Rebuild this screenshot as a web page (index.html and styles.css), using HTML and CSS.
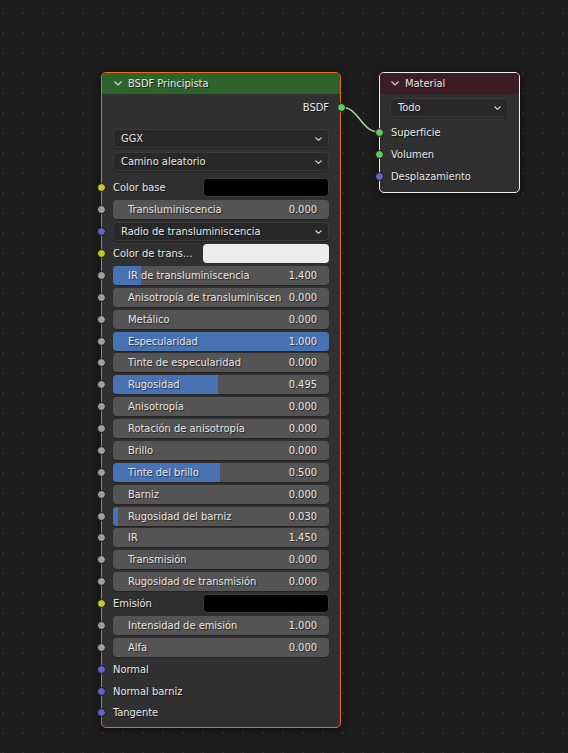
FILE: index.html
```html
<!DOCTYPE html>
<html lang="es">
<head>
<meta charset="UTF-8">
<title>Editor de nodos</title>
<link rel="stylesheet" href="styles.css">
</head>
<body>
<div class="editor">
    <svg class="links" width="568" height="753">
        <path class="link-edge" d="M341 107 C359 107, 361 132, 379 132"/>
        <path class="link" d="M341 107 C359 107, 361 132, 379 132"/>
    </svg>

    <div class="node principled">
        <div class="node-header">
            <svg class="chevron" width="8" height="5" viewBox="0 0 8 5"><polyline points="0.5,0.5 4,4 7.5,0.5"/></svg>
            <span>BSDF Principista</span>
        </div>
        <div class="node-body">
            <div class="out-row">BSDF<i class="socket green out"></i></div>

            <div class="select first"><span>GGX</span><svg class="caret" width="7" height="4" viewBox="0 0 7 4"><polyline points="0.5,0.5 3.5,3.3 6.5,0.5"/></svg></div>
            <div class="select"><span>Camino aleatorio</span><svg class="caret" width="7" height="4" viewBox="0 0 7 4"><polyline points="0.5,0.5 3.5,3.3 6.5,0.5"/></svg></div>

            <div class="rows">
                <div class="row"><i class="socket yellow"></i><span class="label">Color base</span><div class="swatch black"></div></div>
                <div class="row"><i class="socket grey"></i><div class="field"><span class="name">Transluminiscencia</span><span class="value">0.000</span></div></div>
                <div class="row"><i class="socket blue"></i><div class="select wide"><span>Radio de transluminiscencia</span><svg class="caret" width="7" height="4" viewBox="0 0 7 4"><polyline points="0.5,0.5 3.5,3.3 6.5,0.5"/></svg></div></div>
                <div class="row"><i class="socket yellow"></i><span class="label">Color de trans...</span><div class="swatch white"></div></div>
                <div class="row"><i class="socket grey"></i><div class="field"><div class="fill" style="width: 28px"></div><span class="name">IR de transluminiscencia</span><span class="value">1.400</span></div></div>
                <div class="row"><i class="socket grey"></i><div class="field"><span class="name">Anisotropía de transluminiscen</span><span class="value">0.000</span></div></div>
                <div class="row"><i class="socket grey"></i><div class="field"><span class="name">Metálico</span><span class="value">0.000</span></div></div>
                <div class="row"><i class="socket grey"></i><div class="field"><div class="fill" style="width: 216px"></div><span class="name">Especularidad</span><span class="value">1.000</span></div></div>
                <div class="row"><i class="socket grey"></i><div class="field"><span class="name">Tinte de especularidad</span><span class="value">0.000</span></div></div>
                <div class="row"><i class="socket grey"></i><div class="field"><div class="fill" style="width: 105px"></div><span class="name">Rugosidad</span><span class="value">0.495</span></div></div>
                <div class="row"><i class="socket grey"></i><div class="field"><span class="name">Anisotropía</span><span class="value">0.000</span></div></div>
                <div class="row"><i class="socket grey"></i><div class="field"><span class="name">Rotación de anisotropía</span><span class="value">0.000</span></div></div>
                <div class="row"><i class="socket grey"></i><div class="field"><span class="name">Brillo</span><span class="value">0.000</span></div></div>
                <div class="row"><i class="socket grey"></i><div class="field"><div class="fill" style="width: 107px"></div><span class="name">Tinte del brillo</span><span class="value">0.500</span></div></div>
                <div class="row"><i class="socket grey"></i><div class="field"><span class="name">Barniz</span><span class="value">0.000</span></div></div>
                <div class="row"><i class="socket grey"></i><div class="field"><div class="fill" style="width: 5px"></div><span class="name">Rugosidad del barniz</span><span class="value">0.030</span></div></div>
                <div class="row"><i class="socket grey"></i><div class="field"><span class="name">IR</span><span class="value">1.450</span></div></div>
                <div class="row"><i class="socket grey"></i><div class="field"><span class="name">Transmisión</span><span class="value">0.000</span></div></div>
                <div class="row"><i class="socket grey"></i><div class="field"><span class="name">Rugosidad de transmisión</span><span class="value">0.000</span></div></div>
                <div class="row"><i class="socket yellow"></i><span class="label">Emisión</span><div class="swatch black"></div></div>
                <div class="row"><i class="socket grey"></i><div class="field"><span class="name">Intensidad de emisión</span><span class="value">1.000</span></div></div>
                <div class="row"><i class="socket grey"></i><div class="field"><span class="name">Alfa</span><span class="value">0.000</span></div></div>
                <div class="row"><i class="socket blue"></i><span class="label">Normal</span></div>
                <div class="row"><i class="socket blue"></i><span class="label">Normal barniz</span></div>
                <div class="row"><i class="socket blue"></i><span class="label">Tangente</span></div>
            </div>
        </div>
    </div>

    <div class="node material">
        <div class="node-header">
            <svg class="chevron" width="8" height="5" viewBox="0 0 8 5"><polyline points="0.5,0.5 4,4 7.5,0.5"/></svg>
            <span>Material</span>
        </div>
        <div class="node-body">
            <div class="select first"><span>Todo</span><svg class="caret" width="7" height="4" viewBox="0 0 7 4"><polyline points="0.5,0.5 3.5,3.3 6.5,0.5"/></svg></div>
            <div class="rows">
                <div class="row"><i class="socket green"></i><span class="label">Superficie</span></div>
                <div class="row"><i class="socket green"></i><span class="label">Volumen</span></div>
                <div class="row"><i class="socket blue"></i><span class="label">Desplazamiento</span></div>
            </div>
        </div>
    </div>
</div>
</body>
</html>
```

FILE: styles.css
```css
body {
    margin: 0;
    background: #1d1d1d;
    font-family: "DejaVu Sans Condensed", "DejaVu Sans", sans-serif;
    font-size: 11px;
    color: #e8e8e8;
}
.editor {
    position: relative;
    width: 568px;
    height: 753px;
    overflow: hidden;
    background-color: #1d1d1d;
    background-image: radial-gradient(circle, #2d2d2d 1px, transparent 1.3px);
    background-size: 20px 20px;
    background-position: -7px 3px;
}
.links {
    position: absolute;
    left: 0;
    top: 0;
}
.link-edge {
    fill: none;
    stroke: #171717;
    stroke-width: 3.5;
}
.link {
    fill: none;
    stroke: #b4d0ac;
    stroke-width: 1.6;
}

/* nodes */
.node {
    position: absolute;
    box-sizing: border-box;
    background: #303030;
    border-radius: 5px;
    box-shadow: 0 2px 8px rgba(0, 0, 0, 0.55);
}
.principled {
    left: 101px;
    top: 72px;
    width: 240px;
    height: 656px;
    border: 1px solid #ea6a14;
}
.material {
    left: 379px;
    top: 72px;
    width: 141px;
    height: 121px;
    border: 1px solid #f0f0f0;
}
.node-header {
    height: 21px;
    display: flex;
    align-items: center;
    border-radius: 4px 4px 0 0;
    text-shadow: 1px 1px 1px rgba(0, 0, 0, 0.6);
}
.principled .node-header {
    background: #2e642c;
    padding-left: 12px;
}
.material .node-header {
    background: #3e1c25;
    padding-left: 11px;
}
.chevron {
    margin-right: 6px;
}
.chevron polyline, .caret polyline {
    fill: none;
    stroke: #dcdcdc;
    stroke-width: 1.1;
}
.node-body {
    padding: 0 11px;
}
.material .node-body {
    padding: 0 11px 0 10px;
}
.out-row {
    position: relative;
    height: 22px;
    margin-top: 2px;
    display: flex;
    align-items: center;
    justify-content: flex-end;
    text-shadow: 1px 1px 1px rgba(0, 0, 0, 0.6);
}

/* dropdowns */
.select {
    box-sizing: border-box;
    height: 19px;
    margin-top: 4px;
    padding: 0 6px 0 7px;
    display: flex;
    align-items: center;
    justify-content: space-between;
    background: #282828;
    border: 1px solid #3a3a3a;
    border-radius: 4px;
    box-shadow: 0 1px 1px rgba(0, 0, 0, 0.3);
    text-shadow: 1px 1px 1px rgba(0, 0, 0, 0.6);
}
.principled .select.first {
    margin-top: 11px;
}
.select.wide {
    width: 100%;
    margin-top: 0;
}
.caret {
    margin-top: 1px;
}

/* socket rows */
.rows {
    margin-top: 6px;
}
.material .rows {
    margin-top: 5px;
}
.row {
    position: relative;
    height: 21.875px;
    display: flex;
    align-items: center;
}
.label {
    flex: 1;
    text-shadow: 1px 1px 1px rgba(0, 0, 0, 0.6);
}
.material .label {
    padding-left: 1px;
}
.swatch {
    width: 126px;
    height: 19px;
    border-radius: 4px;
    box-sizing: border-box;
}
.swatch.black {
    background: #000;
    border: 1px solid #3c3c3c;
}
.swatch.white {
    background: #ececec;
}
.field {
    position: relative;
    flex: 1;
    height: 19px;
    display: flex;
    align-items: center;
    padding: 0 12px 0 15px;
    background: #545454;
    border-radius: 4px;
    overflow: hidden;
    box-shadow: 0 1px 1px rgba(0, 0, 0, 0.3);
    text-shadow: 1px 1px 1px rgba(0, 0, 0, 0.6);
}
.fill {
    position: absolute;
    left: 0;
    top: 0;
    bottom: 0;
    background: #4772b3;
}
.name {
    position: relative;
    flex: 1;
    white-space: nowrap;
}
.value {
    position: relative;
}

.socket {
    position: absolute;
    top: 50%;
    width: 9px;
    height: 9px;
    margin-top: -4.5px;
    box-sizing: border-box;
    border: 1px solid #161616;
    border-radius: 50%;
}
.principled .socket {
    left: -16.5px;
}
.material .socket {
    left: -15.5px;
}
.principled .socket.out {
    left: auto;
    right: -16.5px;
}
.socket.grey { background: #a1a1a1; }
.socket.yellow { background: #c7c729; }
.socket.blue { background: #6363c7; }
.socket.green { background: #63c763; }
```
